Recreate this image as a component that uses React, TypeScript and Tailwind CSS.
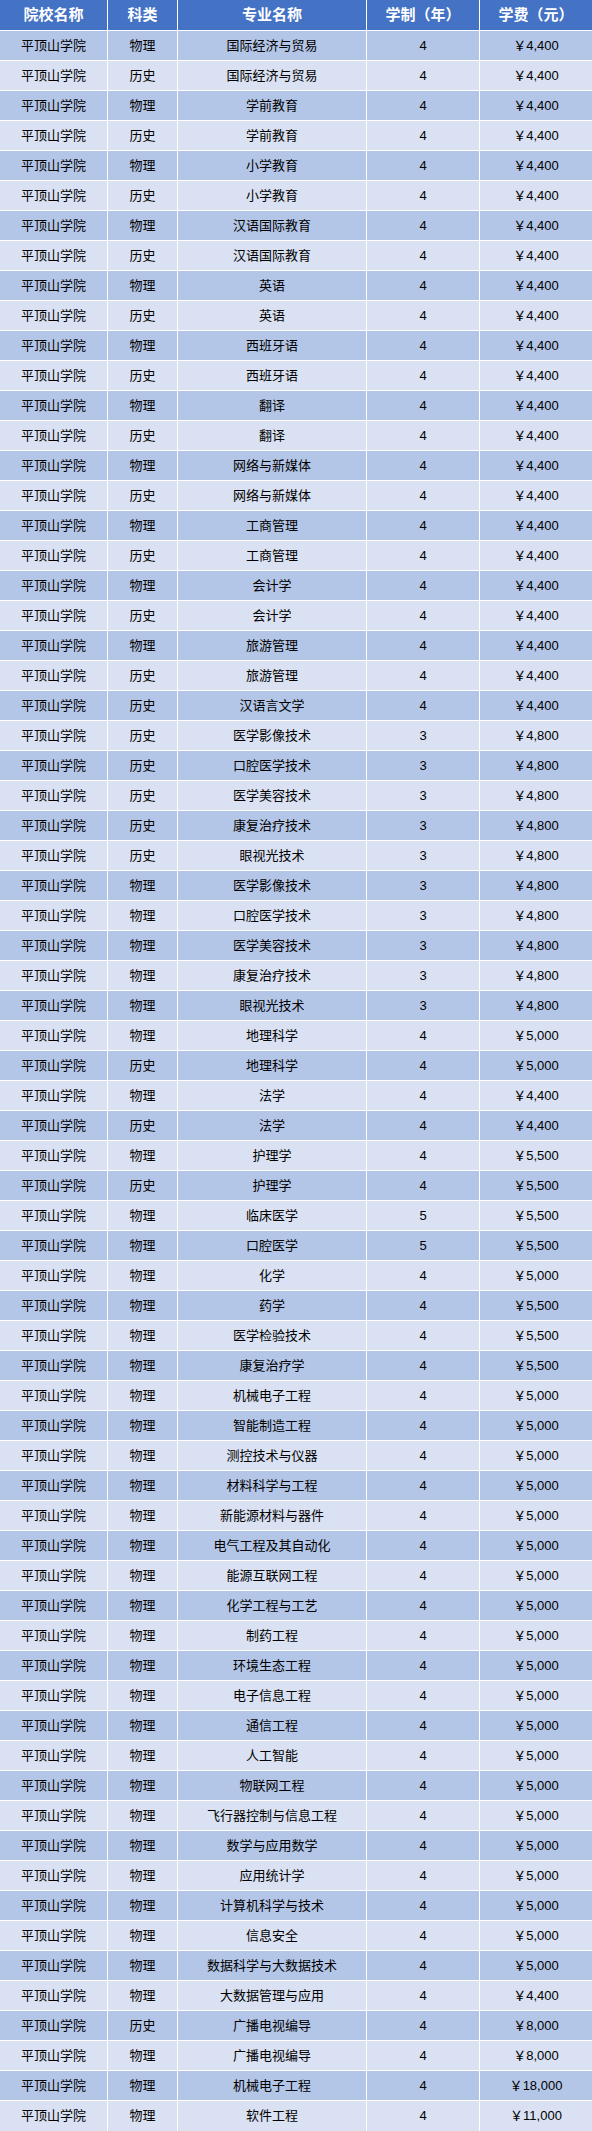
import React from "react";

type Row = [string, string, string, string];

const rows: Row[] = [
  ["物理", "国际经济与贸易", "4", "4,400"],
  ["历史", "国际经济与贸易", "4", "4,400"],
  ["物理", "学前教育", "4", "4,400"],
  ["历史", "学前教育", "4", "4,400"],
  ["物理", "小学教育", "4", "4,400"],
  ["历史", "小学教育", "4", "4,400"],
  ["物理", "汉语国际教育", "4", "4,400"],
  ["历史", "汉语国际教育", "4", "4,400"],
  ["物理", "英语", "4", "4,400"],
  ["历史", "英语", "4", "4,400"],
  ["物理", "西班牙语", "4", "4,400"],
  ["历史", "西班牙语", "4", "4,400"],
  ["物理", "翻译", "4", "4,400"],
  ["历史", "翻译", "4", "4,400"],
  ["物理", "网络与新媒体", "4", "4,400"],
  ["历史", "网络与新媒体", "4", "4,400"],
  ["物理", "工商管理", "4", "4,400"],
  ["历史", "工商管理", "4", "4,400"],
  ["物理", "会计学", "4", "4,400"],
  ["历史", "会计学", "4", "4,400"],
  ["物理", "旅游管理", "4", "4,400"],
  ["历史", "旅游管理", "4", "4,400"],
  ["历史", "汉语言文学", "4", "4,400"],
  ["历史", "医学影像技术", "3", "4,800"],
  ["历史", "口腔医学技术", "3", "4,800"],
  ["历史", "医学美容技术", "3", "4,800"],
  ["历史", "康复治疗技术", "3", "4,800"],
  ["历史", "眼视光技术", "3", "4,800"],
  ["物理", "医学影像技术", "3", "4,800"],
  ["物理", "口腔医学技术", "3", "4,800"],
  ["物理", "医学美容技术", "3", "4,800"],
  ["物理", "康复治疗技术", "3", "4,800"],
  ["物理", "眼视光技术", "3", "4,800"],
  ["物理", "地理科学", "4", "5,000"],
  ["历史", "地理科学", "4", "5,000"],
  ["物理", "法学", "4", "4,400"],
  ["历史", "法学", "4", "4,400"],
  ["物理", "护理学", "4", "5,500"],
  ["历史", "护理学", "4", "5,500"],
  ["物理", "临床医学", "5", "5,500"],
  ["物理", "口腔医学", "5", "5,500"],
  ["物理", "化学", "4", "5,000"],
  ["物理", "药学", "4", "5,500"],
  ["物理", "医学检验技术", "4", "5,500"],
  ["物理", "康复治疗学", "4", "5,500"],
  ["物理", "机械电子工程", "4", "5,000"],
  ["物理", "智能制造工程", "4", "5,000"],
  ["物理", "测控技术与仪器", "4", "5,000"],
  ["物理", "材料科学与工程", "4", "5,000"],
  ["物理", "新能源材料与器件", "4", "5,000"],
  ["物理", "电气工程及其自动化", "4", "5,000"],
  ["物理", "能源互联网工程", "4", "5,000"],
  ["物理", "化学工程与工艺", "4", "5,000"],
  ["物理", "制药工程", "4", "5,000"],
  ["物理", "环境生态工程", "4", "5,000"],
  ["物理", "电子信息工程", "4", "5,000"],
  ["物理", "通信工程", "4", "5,000"],
  ["物理", "人工智能", "4", "5,000"],
  ["物理", "物联网工程", "4", "5,000"],
  ["物理", "飞行器控制与信息工程", "4", "5,000"],
  ["物理", "数学与应用数学", "4", "5,000"],
  ["物理", "应用统计学", "4", "5,000"],
  ["物理", "计算机科学与技术", "4", "5,000"],
  ["物理", "信息安全", "4", "5,000"],
  ["物理", "数据科学与大数据技术", "4", "5,000"],
  ["物理", "大数据管理与应用", "4", "4,400"],
  ["历史", "广播电视编导", "4", "8,000"],
  ["物理", "广播电视编导", "4", "8,000"],
  ["物理", "机械电子工程", "4", "18,000"],
  ["物理", "软件工程", "4", "11,000"],
];

const font = {
  fontFamily: '"Liberation Sans", "Noto Sans CJK SC", sans-serif',
};

export default function App() {
  return (
    <div className="w-[592px] bg-white" style={font}>
      <div className="grid grid-cols-[107px_69px_188px_112px_112px] gap-px bg-white">
        {["院校名称", "科类", "专业名称", "学制（年）", "学费（元）"].map((h) => (
          <div
            key={h}
            className="h-[30px] bg-[#4472c4] text-white font-bold text-[15px] flex items-center justify-center"
          >
            {h}
          </div>
        ))}
        {rows.map((r, i) => {
          const bg = i % 2 === 0 ? "bg-[#b4c6e7]" : "bg-[#d9e1f2]";
          const h = i === rows.length - 1 ? "h-[30px]" : "h-[29px]";
          const cell = `${h} ${bg} text-[13px] text-black flex items-center justify-center whitespace-nowrap`;
          return (
            <React.Fragment key={i}>
              <div className={cell}>平顶山学院</div>
              <div className={cell}>{r[0]}</div>
              <div className={cell}>{r[1]}</div>
              <div className={cell}>{r[2]}</div>
              <div className={cell}>
                <span>￥{r[3]}</span>
              </div>
            </React.Fragment>
          );
        })}
      </div>
    </div>
  );
}
